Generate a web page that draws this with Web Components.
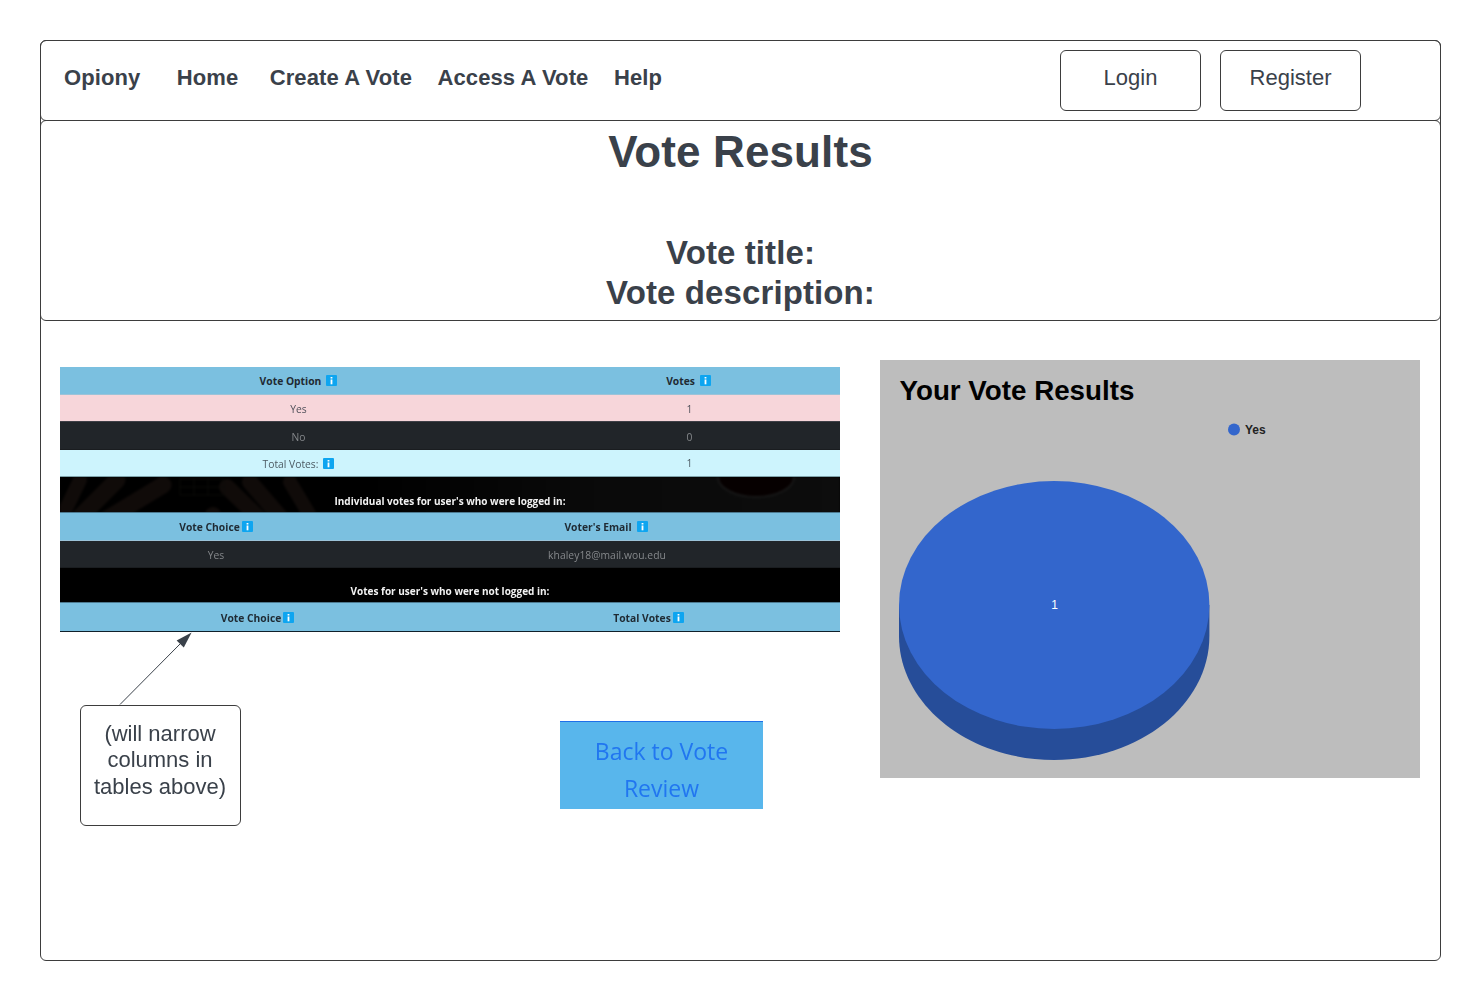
<!DOCTYPE html>
<html lang="en"><head><meta charset="utf-8"><title>Vote Results</title>
<style>
html,body{margin:0;background:#fff}
body{padding:40px;font-family:"Liberation Sans",Arial,sans-serif;color:#3a414a}
</style></head><body>
<wire-frame>
  <nav-bar slot="nav">
    <nav-link style="margin-right:36.300px">Opiony</nav-link>
    <nav-link style="margin-right:31.500px">Home</nav-link>
    <nav-link style="margin-right:25.500px">Create A Vote</nav-link>
    <nav-link style="margin-right:25.500px">Access A Vote</nav-link>
    <nav-link>Help</nav-link>
    <wire-button slot="actions">Login</wire-button>
    <wire-button slot="actions">Register</wire-button>
  </nav-bar>
  <title-panel slot="title" heading="Vote Results" line1="Vote title:" line2="Vote description:"></title-panel>
  <results-table slot="left"></results-table>
  <callout-note slot="note">(will narrow columns in tables above)</callout-note>
  <back-button slot="back">Back to Vote Review</back-button>
  <pie-chart slot="chart"></pie-chart>
</wire-frame>

<script>
const def=(name,css,html,setup)=>customElements.define(name,class extends HTMLElement{
  constructor(){super();const r=this.attachShadow({mode:'open'});r.innerHTML=`<style>${css}</style>${typeof html==='function'?html(this):html}`;}
  connectedCallback(){if(setup)setup(this)}
});

def('wire-frame',`
:host{display:block;box-sizing:border-box;width:1401px;height:921px;border:1px solid #3d3d3d;border-radius:6px;position:relative}
.top{margin:-1px -1px 0}
.content{display:grid;grid-template-columns:800px 540px;column-gap:20px;padding:39px 0 0 19px}
.left{position:relative;padding-top:7px}
.lower{position:relative;display:flex;margin-top:73px;padding-left:20px}
.back{margin:16px 0 0 319px}
svg{position:absolute;left:0;top:272px;overflow:visible}
`,`<div class="top"><slot name="nav"></slot><slot name="title"></slot></div>
<div class="content"><div class="left"><slot name="left"></slot>
<svg width="200" height="80" viewBox="60 632 200 80" aria-hidden="true"><path d="M120 704.500 181 643" fill="none" stroke="#3a414a" stroke-width="1"/><path d="M191.600 632.600 176.600 640.400 183.800 647.600Z" fill="#3a414a"/></svg>
<div class="lower"><slot name="note"></slot><div class="back"><slot name="back"></slot></div></div></div>
<div><slot name="chart"></slot></div></div>`);

def('nav-bar',`
:host{display:flex;box-sizing:border-box;height:81px;border:1px solid #3d3d3d;border-radius:6px;padding:0 79px 0 23px;align-items:center}
.links{display:flex;align-items:center;margin-top:-6px}
.actions{margin-left:auto;display:flex;gap:19px;margin-top:0}
`,`<div class="links"><slot></slot></div><div class="actions"><slot name="actions"></slot></div>`);

def('nav-link',`:host{display:block;font:bold 22px/26px "Liberation Sans",Arial,sans-serif;letter-spacing:.1px;color:#3a414a;white-space:nowrap}`,`<slot></slot>`);

def('wire-button',`:host{display:flex;box-sizing:border-box;width:141px;height:61px;border:1px solid #3d3d3d;border-radius:6px;align-items:center;justify-content:center;font:22px "Liberation Sans",Arial,sans-serif;color:#3a414a;background:#fff;padding-bottom:6px}`,`<slot></slot>`);

def('title-panel',`
:host{display:block;box-sizing:border-box;height:201px;margin-top:-1px;border:1px solid #3d3d3d;border-radius:6px;text-align:center;color:#3a414a}
h1{margin:0;font:bold 44px/60px "Liberation Sans",Arial,sans-serif;letter-spacing:.12px;padding-top:1px}
h2{margin:0;font:bold 33px/40px "Liberation Sans",Arial,sans-serif;letter-spacing:.1px}
.sub{padding-top:51px}
`,h=>`<h1>${h.getAttribute('heading')}</h1><div class="sub"><h2>${h.getAttribute('line1')}</h2><h2>${h.getAttribute('line2')}</h2></div>`);

def('info-badge',`:host{display:inline-block;width:11px;height:11px;vertical-align:-1.5px}svg{display:block}`,
`<svg width="11" height="11" viewBox="0 0 11 11" aria-hidden="true"><rect width="11" height="11" rx="1" fill="#0ea5f0"/><rect x="4.600" y="2" width="1.800" height="1.500" fill="#fff"/><rect x="4.600" y="4.500" width="1.800" height="4.800" fill="#fff"/></svg>`);

def('table-row',`
:host{display:grid;box-sizing:border-box;align-items:center;text-align:center;white-space:nowrap;font:10.300px/1 "Open Sans",sans-serif;position:relative;padding-top:2px}
:host([kind=head]){background:#7bc0e0;color:#1f2a33;font-weight:700;border-bottom:1px solid #9cc3d8;padding-top:0}
:host([kind=pink]){background:#f7d6da;color:#50505a;border-bottom:1px solid #3f3f46}
:host([kind=dark]){background:#212529;color:#85888b;border-bottom:1px solid #1a1d20}
:host([kind=cyan]){background:#cdf4fd;color:#4c5a62;border-bottom:1px solid #7fa3ab;padding-top:1px}
:host([kind=band]){background:#000;color:#f2f2f2;font-weight:700;font-size:10px;align-items:end;padding:1px 0 6px;border-bottom:1px solid #4d7a90;overflow:hidden}
:host([kind=last]){background:#7bc0e0;color:#1f2a33;font-weight:700;border-bottom:1px solid #10202a;padding-top:0}
`,`<slot></slot>`,el=>{
  el.style.height=el.getAttribute('h')+'px';
  el.style.gridTemplateColumns=el.getAttribute('cols')||'1fr';
});

def('results-table',`
:host{display:block;width:780px;filter:blur(.3px)}
.tight{margin-left:2px}
.nudge{left:1px}
svg{position:absolute;left:0;top:0;filter:blur(.8px)}
span{position:relative}
`,`
<table-row kind="head" h="28" cols="477px 303px"><span>Vote Option<info-badge style="margin-left:5px"></info-badge></span><span>Votes<info-badge style="margin-left:5px"></info-badge></span></table-row>
<table-row kind="pink" h="27" cols="477px 303px"><span>Yes</span><span class="nudge">1</span></table-row>
<table-row kind="dark" h="28" cols="477px 303px" style="padding-top:3px"><span>No</span><span class="nudge">0</span></table-row>
<table-row kind="cyan" h="27" cols="477px 303px"><span>Total Votes:<info-badge style="margin-left:5px"></info-badge></span><span class="nudge">1</span></table-row>
<table-row kind="band" h="36">
  <svg width="780" height="36" viewBox="0 0 780 36" aria-hidden="true" fill="none">
    <defs><linearGradient id="fade"><stop offset="0" stop-color="#000"/><stop offset=".5" stop-color="#0a0a0a"/><stop offset="1" stop-color="#0d0d0d"/></linearGradient></defs>
    <rect x="300" width="480" height="36" fill="url(#fade)"/>
    <g stroke="#100b09" stroke-linecap="round"><path d="M3 38 20 3" stroke-width="14"/><path d="M20 40 57 3" stroke-width="17"/><path d="M47 42 103 8" stroke-width="17"/><path d="M167 10 200 42" stroke-width="16"/><path d="M190 5 222 42" stroke-width="16"/><path d="M230 5 252 42" stroke-width="14"/><path d="M153 38v4" stroke-width="16"/></g>
    <path d="M120 2h44v16h-44zM134 2v16M148 2v16M120 10h44" stroke="#0e0c0b" stroke-width=".8"/>
    <ellipse cx="696" cy="0" rx="38" ry="20" fill="#060000" stroke="#171717" stroke-width="2"/>
  </svg>
  <span>Individual votes for user's who were logged in:</span></table-row>
<table-row kind="head" h="28" cols="312px 468px"><span>Vote Choice<info-badge class="tight"></info-badge></span><span>Voter's Email<info-badge style="margin-left:5px"></info-badge></span></table-row>
<table-row kind="dark" h="27" cols="312px 468px"><span>Yes</span><span class="nudge" style="letter-spacing:.05px">khaley18@mail.wou.edu</span></table-row>
<table-row kind="band" h="35"><span>Votes for user's who were not logged in:</span></table-row>
<table-row kind="last" h="29" cols="395px 385px"><span>Vote Choice<info-badge class="tight"></info-badge></span><span class="nudge">Total Votes<info-badge class="tight"></info-badge></span></table-row>
`);

def('callout-note',`:host{display:flex;box-sizing:border-box;width:161px;height:121px;border:1px solid #3d3d3d;border-radius:6px;align-items:center;justify-content:center;text-align:center;font:22px/26.400px "Liberation Sans",Arial,sans-serif;color:#3a414a;padding:0 9px 10px 8px}`,`<slot></slot>`);

def('back-button',`:host{display:block;box-sizing:border-box;width:203px;height:88px;background:#58b6ec;border-top:1px solid #1e6fe8;text-align:center;font:23px/37px "Open Sans",sans-serif;color:#2176f0;padding:11px 20px 0;filter:blur(.25px)}`,`<slot></slot>`);

def('pie-chart',`:host{display:block;width:540px;height:418px;background:#bdbdbd}svg{display:block}`,
`<svg width="540" height="418" viewBox="880 360 540 418" role="img" aria-label="Your Vote Results pie chart">
<text x="899.500" y="400" font-family="Liberation Sans,Arial,sans-serif" font-size="27.750" font-weight="700" fill="#000">Your Vote Results</text>
<circle cx="1234" cy="429.500" r="6" fill="#3366cc"/>
<text x="1245" y="433.500" font-family="Liberation Sans,Arial,sans-serif" font-size="12" font-weight="700" fill="#222">Yes</text>
<path d="M899 605v31c0 68.500 69.400 124 155.200 124s155.200-55.500 155.200-124v-31z" fill="#264d99"/>
<ellipse cx="1054.200" cy="605" rx="155.200" ry="124" fill="#3366cc"/>
<text x="1054.500" y="609" text-anchor="middle" font-family="Liberation Sans,Arial,sans-serif" font-size="12" fill="#fff">1</text>
</svg>`);
</script>
</body></html>
